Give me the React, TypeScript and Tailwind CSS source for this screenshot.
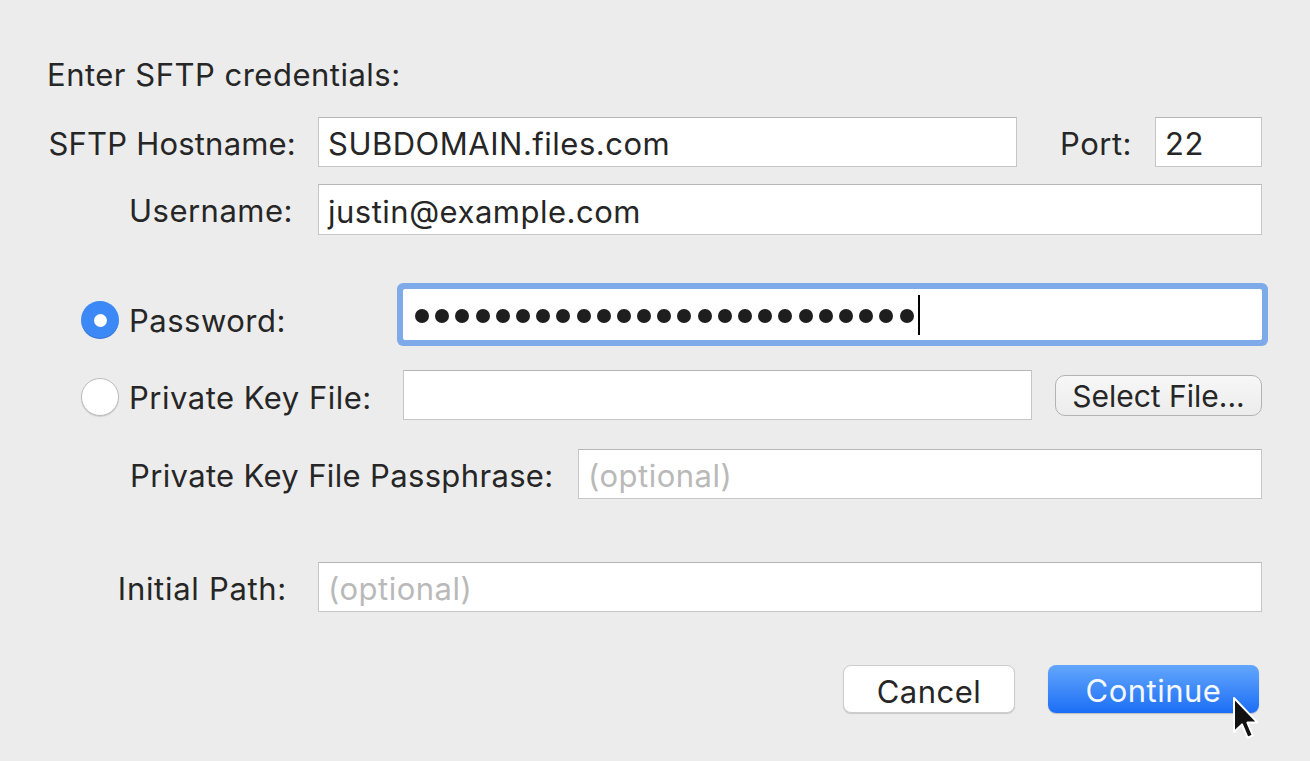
import React from "react";

const font = { fontFamily: "Inter, 'Noto Sans', sans-serif", letterSpacing: "0.5px" };

const Field = ({
  value,
  placeholder,
  className = "",
}: {
  value?: string;
  placeholder?: string;
  className?: string;
}) => (
  <div
    className={`flex h-full items-center border border-[#c6c6c6] border-t-[#b6b6b6] bg-white pl-[9px] pt-[5px] text-[31px] text-[#262626] ${className}`}
  >
    {value ? (
      <span>{value}</span>
    ) : (
      <span className="text-[#b9b9b9]">{placeholder}</span>
    )}
  </div>
);

const Radio = ({ checked }: { checked?: boolean }) =>
  checked ? (
    <div className="flex h-[38px] w-[38px] items-center justify-center rounded-full bg-[#3c88f6] shadow-[inset_0_-1px_0_rgba(0,0,0,0.15)]">
      <div className="h-[13px] w-[13px] rounded-full bg-white" />
    </div>
  ) : (
    <div className="h-[38px] w-[38px] rounded-full border border-[#bdbdbd] bg-white shadow-[0_1px_1px_rgba(0,0,0,0.12)]" />
  );

const Label = ({ children, className = "" }: { children: React.ReactNode; className?: string }) => (
  <span className={`whitespace-nowrap text-[31px] text-[#262626] ${className}`}>{children}</span>
);

export default function App() {
  return (
    <div
      style={font}
      className="relative flex h-[761px] w-[1310px] flex-col overflow-hidden bg-[#ececec] pl-[45px] pr-[48px] pt-[60px]"
    >
      <div className="h-[30px] pl-[2px] text-[31px] leading-[30px] text-[#262626]">
        Enter SFTP credentials:
      </div>

      {/* hostname + port */}
      <div className="mt-[27px] flex h-[50px] items-center">
        <div className="flex w-[251px] shrink-0 justify-end pt-[4px]">
          <Label className="tracking-[0.2px]">SFTP Hostname:</Label>
        </div>
        <div className="ml-[22px] h-full w-[699px]">
          <Field value="SUBDOMAIN.files.com" />
        </div>
        <Label className="ml-[43px] pt-[4px]">Port:</Label>
        <div className="ml-auto h-full w-[107px]">
          <Field value="22" />
        </div>
      </div>

      {/* username */}
      <div className="mt-[17px] flex h-[51px] items-center">
        <div className="flex w-[248px] shrink-0 justify-end pt-[4px]">
          <Label>Username:</Label>
        </div>
        <div className="ml-[25px] h-full flex-1">
          <Field value="justin@example.com" />
        </div>
      </div>

      {/* password */}
      <div className="mt-[54px] flex h-[51px] items-center">
        <div className="flex w-[358px] shrink-0 items-center pl-[36px] pt-[11px]">
          <Radio checked />
          <Label className="ml-[10px] pt-[2px]">Password:</Label>
        </div>
        <div className="flex h-full flex-1 items-center rounded-[2px] bg-white pl-[12px] ring-[6px] ring-[#7eaaea]">
          <div className="flex items-center gap-[6.2px] pt-[2px]">
            {Array.from({ length: 25 }).map((_, i) => (
              <div key={i} className="h-[14px] w-[14px] rounded-full bg-[#1e1e1e]" />
            ))}
          </div>
          <div className="ml-[4px] h-[40px] w-[2px] bg-black" />
        </div>
      </div>

      {/* private key file */}
      <div className="mt-[30px] flex h-[50px] items-center">
        <div className="flex w-[358px] shrink-0 items-center pl-[36px] pt-[4px]">
          <Radio />
          <Label className="ml-[10px] pt-[2px]">Private Key File:</Label>
        </div>
        <div className="h-full w-[629px]">
          <Field />
        </div>
        <button className="ml-[23px] flex h-[41px] flex-1 items-center justify-center rounded-[10px] border border-[#b3b3b3] bg-gradient-to-b from-[#f7f7f7] to-[#ececec] pt-[3px] text-[30px] tracking-[0px] text-[#262626]">
          Select File...
        </button>
      </div>

      {/* passphrase */}
      <div className="mt-[29px] flex h-[50px] items-center">
        <div className="w-[533px] shrink-0 pl-[85px] pt-[4px]">
          <Label className="tracking-[0.35px]">Private Key File Passphrase:</Label>
        </div>
        <div className="h-full flex-1">
          <Field placeholder="(optional)" />
        </div>
      </div>

      {/* initial path */}
      <div className="mt-[63px] flex h-[50px] items-center">
        <div className="flex w-[242px] shrink-0 justify-end pt-[4px]">
          <Label className="tracking-[0.7px]">Initial Path:</Label>
        </div>
        <div className="ml-[31px] h-full flex-1">
          <Field placeholder="(optional)" />
        </div>
      </div>

      {/* buttons */}
      <div className="mt-[53px] flex h-[48px] justify-end pr-[3px]">
        <button className="h-full w-[172px] rounded-[8px] border border-[#cdcdcd] bg-white pt-[3px] text-[31px] text-[#262626] shadow-[0_1px_1px_rgba(0,0,0,0.15)]">
          Cancel
        </button>
        <button className="ml-[33px] h-full w-[211px] rounded-[8px] bg-gradient-to-b from-[#62a6fc] to-[#1a6df5] pt-[3px] text-[31px] text-[#f4f8ff] shadow-[0_1px_1px_rgba(0,0,0,0.2)]">
          Continue
        </button>
      </div>

      {/* mouse pointer */}
      <svg
        className="absolute left-[1232px] top-[696px]"
        width="28"
        height="48"
        viewBox="0 0 14 24"
      >
        <path
          d="M1 1 L1 18 L5 14.2 L7.8 20.8 L10.4 19.7 L7.7 13.3 L12.8 13.3 Z"
          fill="#111"
          stroke="#fff"
          strokeWidth="1"
          strokeLinejoin="round"
        />
      </svg>
    </div>
  );
}
